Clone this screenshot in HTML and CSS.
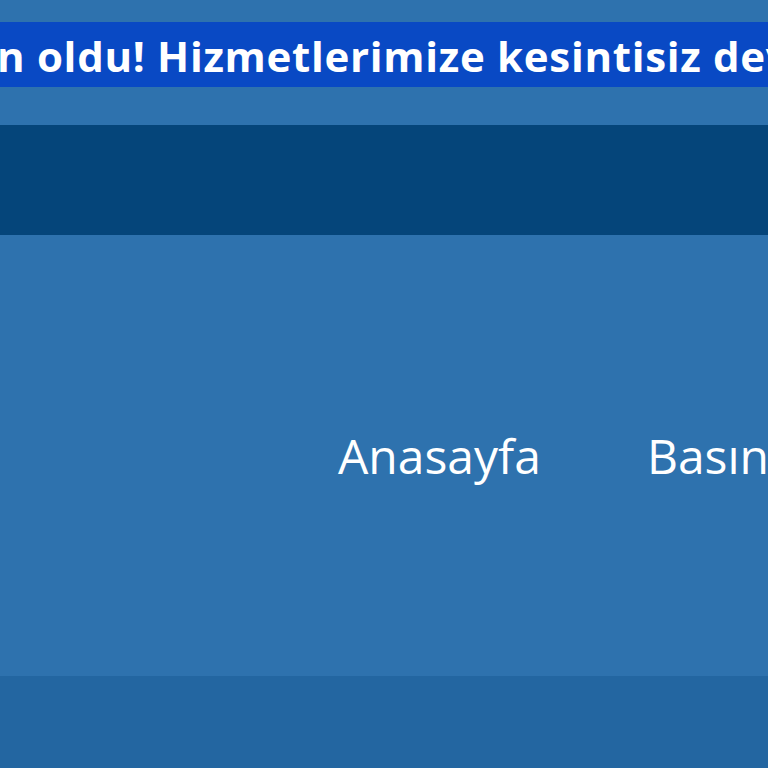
FILE: index.html
```html
<!DOCTYPE html>
<html lang="tr">
<head>
<meta charset="utf-8">
<title>Anasayfa</title>
<link rel="stylesheet" href="styles.css">
</head>
<body>
<div class="top">
  <div class="announce"><span class="announce-text">n oldu! Hizmetlerimize kesintisiz devam ediyoruz.</span></div>
</div>
<div class="darkbar"></div>
<main class="hero">
  <nav class="nav">
    <a class="nav-link" href="#">Anasayfa</a>
    <a class="nav-link" href="#">Basın</a>
  </nav>
</main>
<footer class="bottom"></footer>
</body>
</html>
```
FILE: styles.css
```css
html, body {
  margin: 0;
  padding: 0;
}
body {
  width: 768px;
  height: 768px;
  overflow: hidden;
  background: #2e72ae;
  font-family: "Open Sans", "Liberation Sans", sans-serif;
}
.top {
  height: 125px;
  padding-top: 22px;
  box-sizing: border-box;
  background: #2e72ae;
}
.announce {
  height: 65px;
  background: #0949c4;
  overflow: hidden;
  white-space: nowrap;
  display: flex;
  align-items: center;
}
.announce-text {
  color: #ffffff;
  font-weight: 700;
  font-size: 42px;
  letter-spacing: 0.7px;
  line-height: 1;
  margin-left: -3px;
  padding-top: 2px;
}
.darkbar {
  height: 110px;
  background: #05457a;
}
.hero {
  height: 441px;
  background: #2e72ae;
  display: flex;
  align-items: center;
  overflow: hidden;
}
.nav {
  display: flex;
  gap: 106px;
  padding-left: 338px;
  white-space: nowrap;
}
.nav-link {
  color: #ffffff;
  text-decoration: none;
  font-size: 48px;
  line-height: 1;
}
.bottom {
  height: 92px;
  background: #2366a1;
}
```
